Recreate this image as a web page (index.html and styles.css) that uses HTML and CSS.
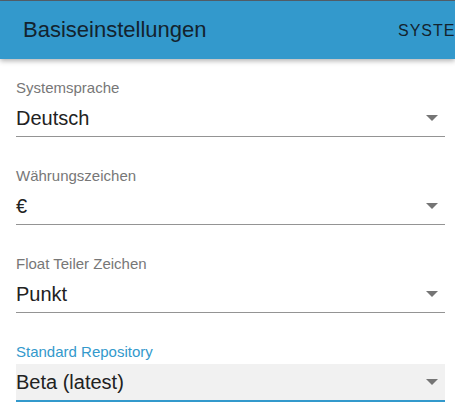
FILE: index.html
```html
<!DOCTYPE html>
<html lang="de">
<head>
<meta charset="utf-8">
<link rel="stylesheet" href="styles.css">
</head>
<body>
<div class="strip"></div>
<header class="appbar">
  <h1 class="title">Basiseinstellungen</h1>
  <span class="tab">System</span>
</header>
<main class="form">
  <div class="field">
    <label class="label">Systemsprache</label>
    <div class="select"><span class="value">Deutsch</span><span class="arrow"></span></div>
  </div>
  <div class="field">
    <label class="label">Währungszeichen</label>
    <div class="select"><span class="value">€</span><span class="arrow"></span></div>
  </div>
  <div class="field">
    <label class="label">Float Teiler Zeichen</label>
    <div class="select"><span class="value">Punkt</span><span class="arrow"></span></div>
  </div>
  <div class="field focused">
    <label class="label">Standard Repository</label>
    <div class="select"><span class="value">Beta (latest)</span><span class="arrow"></span></div>
  </div>
</main>
</body>
</html>
```
FILE: styles.css
```css
html, body {
  margin: 0;
  padding: 0;
  background: #fff;
  font-family: "Liberation Sans", Arial, sans-serif;
  overflow: hidden;
}
.strip {
  height: 1px;
  background: #56616c;
}
.appbar {
  position: relative;
  z-index: 1;
  height: 58px;
  background: #3399cc;
  display: flex;
  align-items: center;
  padding-left: 23px;
  box-shadow: 0 2px 5px rgba(0, 0, 0, 0.3);
  white-space: nowrap;
  overflow: hidden;
}
.title {
  margin: 0;
  font-size: 22px;
  font-weight: normal;
  color: #13232e;
  flex: 0 0 375px;
}
.tab {
  font-size: 16px;
  text-transform: uppercase;
  letter-spacing: 1px;
  color: #13232e;
  padding-top: 1px;
}
.form {
  padding: 21px 10px 0 16px;
  display: flex;
  flex-direction: column;
  gap: 31px;
}
.field {
  display: flex;
  flex-direction: column;
}
.label {
  font-size: 15px;
  line-height: 16px;
  color: #777;
  margin-bottom: 4px;
}
.select {
  height: 36px;
  display: flex;
  align-items: center;
  justify-content: space-between;
  border-bottom: 1px solid #949494;
}
.value {
  font-size: 20px;
  color: #222;
  line-height: 36px;
}
.arrow {
  width: 0;
  height: 0;
  border-left: 6px solid transparent;
  border-right: 6px solid transparent;
  border-top: 6px solid #757575;
  margin-right: 7px;
}
.focused .label {
  color: #3399cc;
}
.focused .select {
  background: #f1f1f1;
  border-bottom: 2px solid #3399cc;
}
```
